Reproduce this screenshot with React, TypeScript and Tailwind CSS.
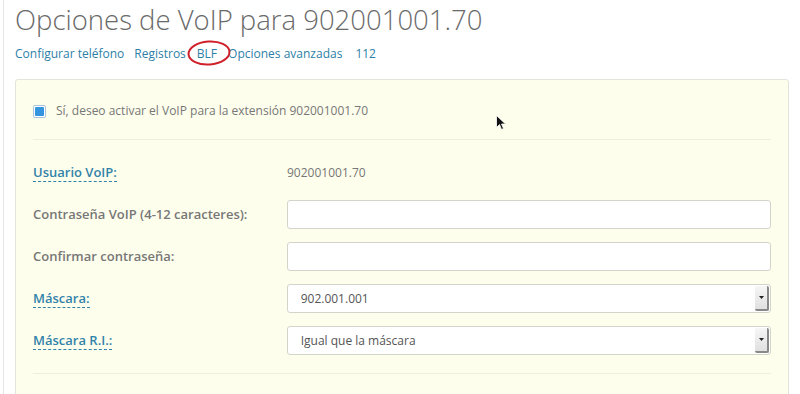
import React from 'react';

const font = { fontFamily: '"Open Sans", "Noto Sans", sans-serif' };

function HelpLabel({ children }: { children: React.ReactNode }) {
    return (
        <span className="font-semibold text-[#3283aa] border-b border-dashed border-[#3283aa] leading-[16px]">
            {children}
        </span>
    );
}

function SelectBox({ value }: { value: string }) {
    return (
        <div className="flex h-[29px] w-[485px] items-stretch rounded-[3px] border border-[#d4d4cc] bg-white">
            <div className="flex flex-1 items-center pl-[13px] text-[12px] text-[#555]">{value}</div>
            <div className="m-[1px] flex w-[14px] items-center justify-center rounded-[2px] border-r-2 border-b-2 border-[#888] bg-gradient-to-b from-[#f6f6f6] to-[#e0e0e0]">
                <svg width="5" height="3" viewBox="0 0 5 3">
                    <path d="M0 0h5L2.5 3z" fill="#222" />
                </svg>
            </div>
        </div>
    );
}

export default function App() {
    return (
        <div className="relative h-[394px] w-[800px] overflow-hidden bg-white" style={font}>
            <div className="ml-[3px] h-full border-l border-[#e6e6e6] pl-[11px] pr-[11px]">
                {/* Title */}
                <h1 className="pt-[2px] text-[27.5px] font-light leading-[36px] text-[#6a6a6a]">
                    Opciones de VoIP para 902001001.70
                </h1>

                {/* Sub navigation */}
                <div className="relative mt-[8px] flex text-[12px] leading-[16px] text-[#2d7fa6]">
                    <span>Configurar teléfono</span>
                    <span className="ml-[10px]">Registros</span>
                    <span className="ml-[11px]">BLF</span>
                    <span className="ml-[11px]">Opciones avanzadas</span>
                    <span className="ml-[13px]">112</span>
                    <svg className="absolute left-[172px] top-[-7px]" width="44" height="28" viewBox="0 0 44 28">
                        <ellipse cx="22" cy="14" rx="20.5" ry="11.5" fill="none" stroke="#d0202a" strokeWidth="2" transform="rotate(-4 22 14)" />
                    </svg>
                </div>

                {/* Panel */}
                <div className="mt-[17px] h-[400px] w-[774px] rounded-t-[3px] border border-[#e4e4dc] bg-[#fefeec] px-[17px]">
                    <div className="flex items-center gap-[10px] border-b border-[#efefdf] pt-[23px] pb-[20px]">
                        <div className="flex h-[13px] w-[13px] items-center justify-center rounded-[2px] border border-[#a9c4dc] bg-white">
                            <div className="h-[9px] w-[9px] rounded-[1px] bg-[#3594de]" />
                        </div>
                        <span className="text-[12px] leading-[16px] text-[#777]">
                            Sí, deseo activar el VoIP para la extensión 902001001.70
                        </span>
                    </div>

                    <div className="flex flex-col gap-[13px] border-b border-[#efefdf] pt-[24px] pb-[18px] text-[13px]">
                        <div className="mb-[5px] flex h-[18px] items-center">
                            <div className="w-[254px]"><HelpLabel>Usuario VoIP:</HelpLabel></div>
                            <span className="text-[12px] text-[#777]">902001001.70</span>
                        </div>
                        <div className="flex items-center">
                            <div className="w-[254px] font-semibold text-[#777]">Contraseña VoIP (4-12 caracteres):</div>
                            <div className="h-[29px] w-[485px] rounded-[3px] border border-[#d4d4cc] bg-white" />
                        </div>
                        <div className="flex items-center">
                            <div className="w-[254px] font-semibold text-[#777]">Confirmar contraseña:</div>
                            <div className="h-[29px] w-[485px] rounded-[3px] border border-[#d4d4cc] bg-white" />
                        </div>
                        <div className="flex items-center">
                            <div className="w-[254px]"><HelpLabel>Máscara:</HelpLabel></div>
                            <SelectBox value="902.001.001" />
                        </div>
                        <div className="flex items-center">
                            <div className="w-[254px]"><HelpLabel>Máscara R.I.:</HelpLabel></div>
                            <SelectBox value="Igual que la máscara" />
                        </div>
                    </div>
                </div>
            </div>

            {/* mouse cursor */}
            <svg className="absolute left-[496px] top-[115px]" width="10" height="16" viewBox="0 0 10 16">
                <path d="M0.5 0.5v12l3-3 2 5 2-1-2-4.5h4z" fill="#111" stroke="#fff" strokeWidth="0.8" />
            </svg>
        </div>
    );
}
